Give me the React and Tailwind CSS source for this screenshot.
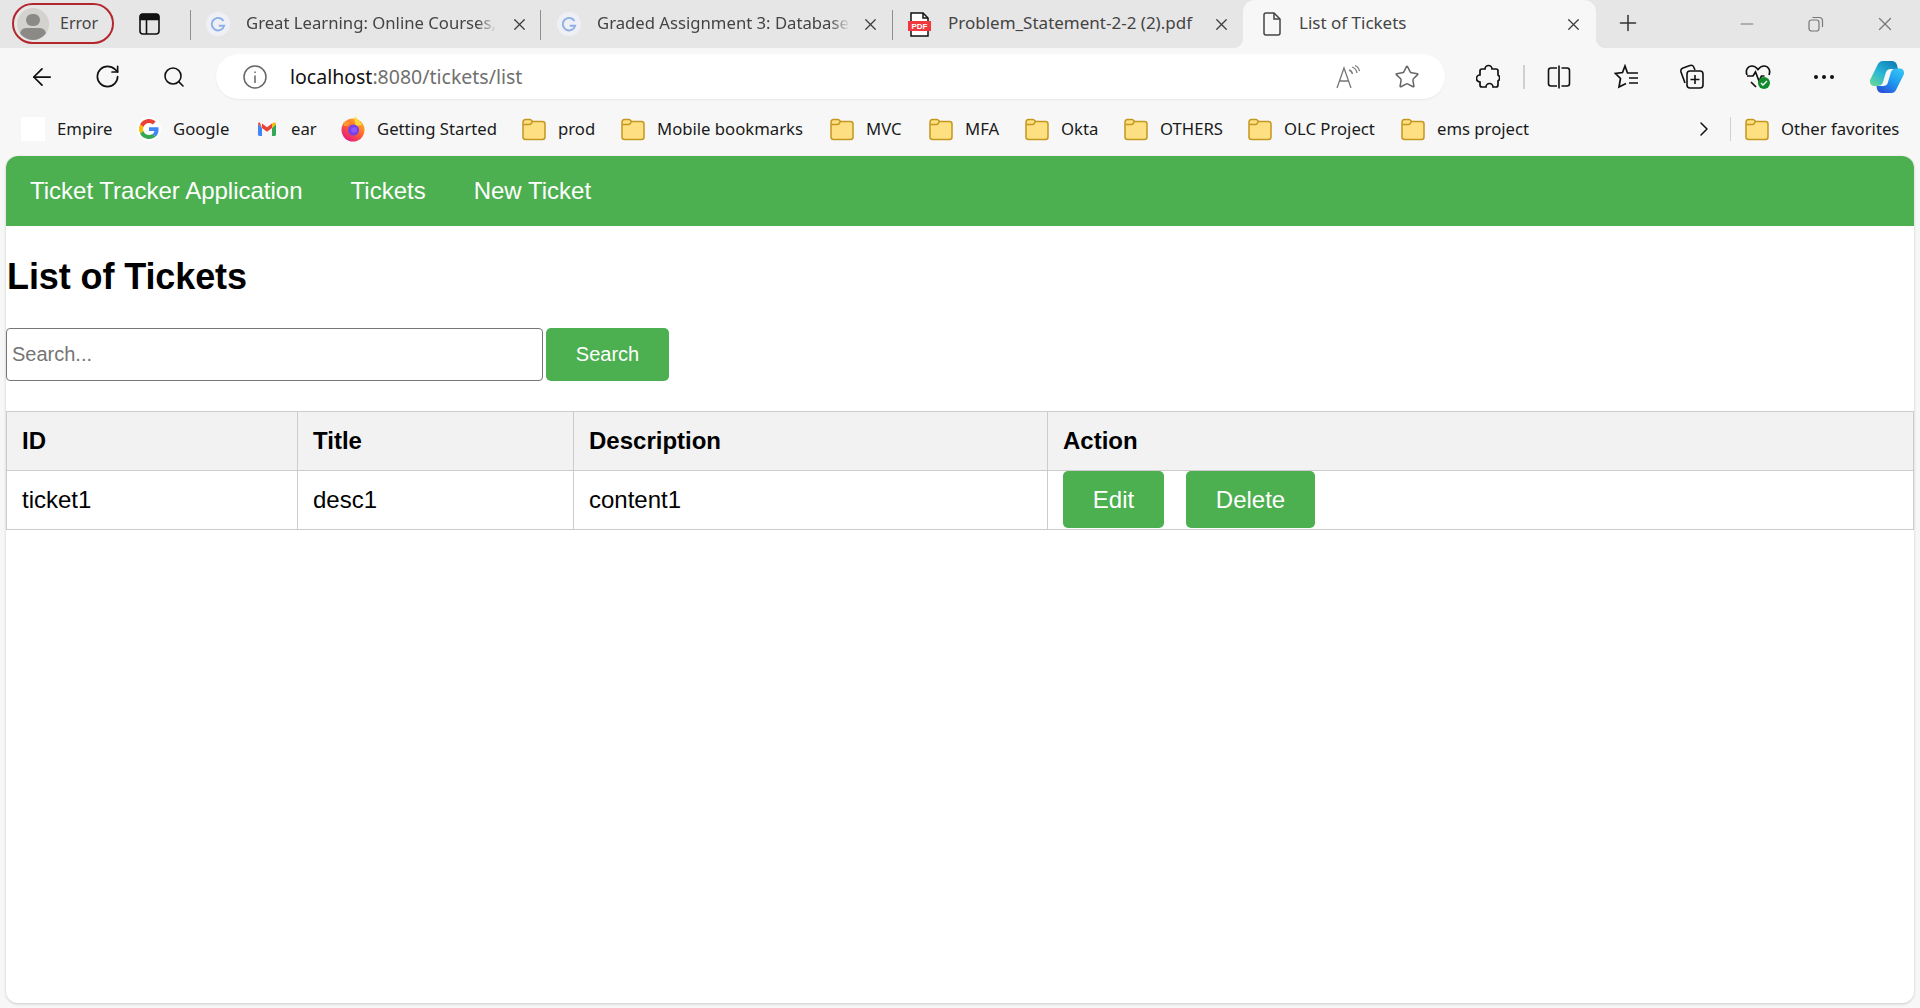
import { ArrowLeft, RotateCw, Search, Plus, X, Minus, ChevronRight, Star } from 'lucide-react';

const chromeFont = "font-['Noto_Sans',sans-serif]";

function GoogleFaded() {
  return (
    <div className="w-6 h-6 rounded-full bg-[#eef0f5] flex items-center justify-center">
      <svg width="15" height="15" viewBox="0 0 24 24" fill="none" stroke="#8fb0e6" strokeWidth="3">
        <path d="M20 6.5A10 10 0 1 0 21 14H12.5" />
      </svg>
    </div>
  );
}

function GoogleIcon() {
  return (
    <div className="-ml-[2px] w-6 h-6 rounded-full bg-white flex items-center justify-center">
      <svg width="20" height="20" viewBox="0 0 48 48">
        <path fill="#EA4335" d="M24 9.5c3.5 0 6.700 1.200 9.200 3.600l6.900-6.900C35.900 2.400 30.500 0 24 0 14.600 0 6.500 5.400 2.600 13.200l8 6.200C12.500 13.600 17.800 9.500 24 9.500z" />
        <path fill="#4285F4" d="M47 24.500c0-1.600-.1-3.100-.4-4.500H24v9h12.900c-.6 3-2.200 5.500-4.700 7.200l7.700 6c4.500-4.200 7.100-10.300 7.100-17.700z" />
        <path fill="#FBBC05" d="M10.600 28.600A14.500 14.500 0 0 1 9.800 24c0-1.600.3-3.200.8-4.600l-8-6.200A24 24 0 0 0 0 24c0 3.900.9 7.500 2.600 10.800l8-6.200z" />
        <path fill="#34A853" d="M24 48c6.500 0 11.900-2.100 15.900-5.800l-7.700-6c-2.200 1.500-4.900 2.300-8.200 2.300-6.200 0-11.500-4.100-13.400-9.900l-8 6.200C6.500 42.600 14.600 48 24 48z" />
      </svg>
    </div>
  );
}

function GmailIcon() {
  return (
    <svg width="18" height="14" viewBox="0 0 18 14">
      <path fill="#4285F4" d="M0 2v10.500C0 13.300.7 14 1.500 14H4V6z" />
      <path fill="#34A853" d="M14 6v8h2.500c.8 0 1.500-.7 1.500-1.500V2z" />
      <path fill="#EA4335" d="M4 6 1.800.6C1 0 0 .7 0 2l4 4 5 3.800L14 6V1.500L9 5.200 4 1.500z" />
      <path fill="#FBBC05" d="M14 1.500V6l4-4c0-1.300-1-2-1.800-1.400z" />
    </svg>
  );
}

function FirefoxIcon() {
  return (
    <svg width="24" height="26" viewBox="0 0 24 26">
      <defs>
        <linearGradient id="ffBody" x1="0.8" y1="0.1" x2="0.2" y2="0.95">
          <stop offset="0" stopColor="#ffb11f" />
          <stop offset="0.5" stopColor="#ff5a36" />
          <stop offset="1" stopColor="#e31587" />
        </linearGradient>
      </defs>
      <circle cx="12" cy="14" r="11.500" fill="url(#ffBody)" />
      <path d="M14 0c1 3 5 4 7 9l-6 1c-1-3-2-6-1-10z" fill="#ffd53d" />
      <path d="M2 7c2-2 6-2 7 0l-2 3H3z" fill="#ff9a2e" />
      <circle cx="12.500" cy="14" r="5.500" fill="#7542e5" />
      <circle cx="13" cy="14" r="2.800" fill="#9059ff" />
    </svg>
  );
}

function FolderIcon() {
  return (
    <svg width="24" height="24" viewBox="0 0 24 24">
      <path d="M1 5.500C1 3.600 2 2.500 3.500 2.500h4.300c1 0 1.700.5 2.200 1.300l.5.700h10C22.100 4.500 23 5.500 23 7v13c0 1.500-.9 2.500-2.500 2.500h-17C2 22.500 1 21.500 1 20z" fill="#fedf82" stroke="#c4981f" strokeWidth="1.500" />
      <path d="M1.500 7.500h6c1.400 0 2-1 2.700-3" fill="none" stroke="#c4981f" strokeWidth="1.500" />
    </svg>
  );
}

function CopilotIcon() {
  return (
    <svg width="36" height="34" viewBox="0 0 36 34">
      <defs>
        <linearGradient id="copA" x1="0" y1="1" x2="0.8" y2="0">
          <stop offset="0" stopColor="#6fdc8e" />
          <stop offset="0.5" stopColor="#27b6d6" />
          <stop offset="1" stopColor="#0f7fb8" />
        </linearGradient>
        <linearGradient id="copB" x1="0.2" y1="1" x2="0.9" y2="0">
          <stop offset="0" stopColor="#2a4fd8" />
          <stop offset="0.5" stopColor="#1e9bf0" />
          <stop offset="1" stopColor="#39c6f5" />
        </linearGradient>
      </defs>
      <path d="M8 6C9 3 11 1 14 1h9c2 0 4 1 5 4l1 4h-7c-3 0-4.500 1.500-5 3l-3 10c-1 3-3 4-6 4H5c-3 0-4.500-3-4-6z" fill="url(#copA)" />
      <path d="M28 28c-1 3-3 5-6 5h-9c-2 0-4-1-5-4l-.5-3H14c3 0 4.500-1.500 5-4l3-10c1-2.500 3-3.500 6-3.500h3c3 0 4.500 2.500 4 5.500z" fill="url(#copB)" />
    </svg>
  );
}

function TabClose() {
  return <X size={19} strokeWidth={1.6} className="text-[#3c3c3c]" />;
}

function Tabs() {
  return (
    <div className={`flex h-12 bg-[#e6e6e6] ${chromeFont}`}>
      <div className="ml-3 mt-[3px] w-[102px] h-[41px] rounded-full border-2 border-[#b3262c] flex items-center pl-[3px]">
        <div className="w-8 h-8 rounded-full bg-[#d3d2cf] overflow-hidden flex flex-col items-center">
          <div className="mt-[6px] w-[14px] h-[14px] rounded-full bg-[#8c8a87]" />
          <div className="mt-[2px] w-[26px] h-[14px] rounded-full bg-[#8c8a87]" />
        </div>
        <span className="ml-[11px] -mt-[2px] text-[16px] text-[#444]">Error</span>
      </div>

      <div className="ml-[25px] mt-[13px]">
        <svg width="21" height="22" viewBox="0 0 21 22" fill="none" stroke="#111" strokeWidth="1.600">
          <rect x="1" y="1" width="19" height="20" rx="3" />
          <path d="M1 6.500h19M7.500 6.500V21" />
          <path d="M3 1.500h15c1 0 1.500 1 1.500 2V6H1.500V3.500c0-1 .5-2 1.500-2z" fill="#111" />
        </svg>
      </div>

      <div className="ml-[30px] mt-[10px] w-px h-[30px] bg-[#8f8f8f]" />

      <div className="w-[349px] flex items-center pl-[15px] h-[48px]">
        <GoogleFaded />
        <span className="ml-[16px] -mt-[2px] w-[251px] whitespace-nowrap text-[16.7px] text-[#444] [mask-image:linear-gradient(to_right,black_92%,transparent)]">
          Great Learning: Online Courses,
        </span>
        <div className="ml-[13px]"><TabClose /></div>
      </div>

      <div className="mt-[10px] w-px h-[30px] bg-[#8f8f8f]" />

      <div className="w-[351px] flex items-center pl-[16px] h-[48px]">
        <GoogleFaded />
        <span className="ml-[16px] -mt-[2px] w-[253px] whitespace-nowrap text-[16.7px] text-[#444] [mask-image:linear-gradient(to_right,black_92%,transparent)]">
          Graded Assignment 3: Database
        </span>
        <div className="ml-[11px]"><TabClose /></div>
      </div>

      <div className="mt-[10px] w-px h-[30px] bg-[#8f8f8f]" />

      <div className="w-[350px] flex items-center pl-[15px] h-[48px]">
        <svg width="23" height="25" viewBox="0 0 23 25">
          <path d="M3 1h12l5 5v18H3z" fill="#fff" stroke="#111" strokeWidth="1.500" />
          <path d="M15 1v5h5" fill="none" stroke="#111" strokeWidth="1.500" />
          <rect x="0" y="9" width="23" height="10" fill="#f0383f" />
          <text x="11.500" y="17" textAnchor="middle" fontSize="8" fontWeight="700" fill="#fff" fontFamily="Liberation Sans, sans-serif">PDF</text>
        </svg>
        <span className="ml-[17px] -mt-[2px] w-[256px] whitespace-nowrap text-[17px] text-[#444]">Problem_Statement-2-2 (2).pdf</span>
        <div className="ml-[8px]"><TabClose /></div>
      </div>

      <div className="relative w-[353px] flex items-center pl-[20px] h-[48px] bg-[#f7f7f7] rounded-t-[12px] before:absolute before:left-[-10px] before:bottom-0 before:w-[10px] before:h-[10px] before:bg-[radial-gradient(circle_at_0_0,#e6e6e6_10px,#f7f7f7_10.5px)] after:absolute after:right-[-10px] after:bottom-0 after:w-[10px] after:h-[10px] after:bg-[radial-gradient(circle_at_100%_0,#e6e6e6_10px,#f7f7f7_10.5px)]">
        <svg width="18" height="24" viewBox="0 0 18 24" fill="none" stroke="#444" strokeWidth="1.500">
          <path d="M3 1h8l6 6v14c0 1.200-.8 2-2 2H3c-1.200 0-2-.8-2-2V3c0-1.200.8-2 2-2z" />
          <path d="M11 1v6h6" />
        </svg>
        <span className="ml-[18px] -mt-[2px] w-[265px] text-[17px] text-[#444]">List of Tickets</span>
        <TabClose />
      </div>

      <Plus size={26} strokeWidth={1.400} className="ml-[19px] mt-[10px] text-[#333]" />
      <Minus size={20} strokeWidth={1.300} className="ml-[96px] mt-[14px] text-[#777]" />
      <div className="ml-[51px] mt-[16px]">
        <svg width="16" height="16" viewBox="0 0 16 16" fill="none" stroke="#777" strokeWidth="1.200">
          <rect x="1" y="4" width="10" height="11" rx="2.500" />
          <path d="M4.500 1.500h6.500c2 0 3.500 1.500 3.500 3.500v6" />
        </svg>
      </div>
      <X size={22} strokeWidth={1.300} className="ml-[50px] mt-[13px] text-[#777]" />
    </div>
  );
}

function Toolbar() {
  return (
    <div className={`flex items-center h-[62px] pb-[5px] ${chromeFont}`}>
      <ArrowLeft size={28} strokeWidth={1.500} className="ml-7 text-[#111]" />
      <RotateCw size={27} strokeWidth={1.500} className="ml-[38px] text-[#111]" />
      <Search size={24} strokeWidth={1.600} className="ml-[41px] text-[#111] " />

      <div className="ml-[30px] w-[1229px] h-[45px] rounded-full bg-white shadow-[0_1px_2px_rgba(0,0,0,0.06)] flex items-center pl-[27px]">
        <svg width="24" height="24" viewBox="0 0 24 24" fill="none" stroke="#666" strokeWidth="1.500">
          <circle cx="12" cy="12" r="11" />
          <path d="M12 10.500V18M12 6.500v1.500" />
        </svg>
        <span className="ml-[23px] w-[1046px] text-[19.5px] text-[#111]">
          localhost<span className="text-[#70706f]">:8080/tickets/list</span>
        </span>
        <svg width="24" height="24" viewBox="0 0 24 24" fill="none" stroke="#777" strokeWidth="1.300">
          <path d="M1 23 8 3l7 20M3.500 16h9" />
          <path d="M13 5c2 .5 3 2 3.500 4M16 2c3 1 4.500 3 5 6M19 .5c2.500 1 4 3 4.500 5.500" />
        </svg>
        <Star size={26} strokeWidth={1.400} className="ml-[34px] text-[#666]" />
      </div>

      <svg width="24" height="26" viewBox="0 0 24 26" fill="none" stroke="#111" strokeWidth="1.700" className="ml-[31px]">
        <path d="M9 5a3.500 3.500 0 0 1 7 0h4c1 0 2 1 2 2v4a3.500 3.500 0 0 1 0 6v4c0 1-1 2-2 2h-3a3.500 3.500 0 0 0-7 0H6c-1 0-2-1-2-2v-3a3.500 3.500 0 0 1 0-7V7c0-1 1-2 2-2z" />
      </svg>
      <div className="ml-[23px] w-[2px] h-[24px] bg-[#d0d0d0]" />
      <svg width="24" height="24" viewBox="0 0 24 24" fill="none" stroke="#111" strokeWidth="1.600" className="ml-[22px]">
        <path d="M10 3H4C2.500 3 1.500 4 1.500 5.500v13C1.500 20 2.500 21 4 21h6M14.500 3H20c1.500 0 2.500 1 2.500 2.500v13c0 1.500-1 2.500-2.500 2.500h-5.500M12 0.500v23" />
      </svg>
      <svg width="25" height="25" viewBox="0 0 25 25" fill="none" stroke="#111" strokeWidth="1.700" className="ml-[43px]">
        <path d="M16 9h-2.500L11 2 8.500 8.500l-7 1 5 5L5 23l7-3.500" />
        <path d="M16 9h8M15 14h9M15 19h9" />
      </svg>
      <svg width="25" height="25" viewBox="0 0 25 25" fill="none" stroke="#111" strokeWidth="1.600" className="ml-[40px]">
        <path d="M6 19 2 8c-.5-2 .5-3.500 2-4l7-2.500c1.500-.5 3 0 3.700 1.500L16 6" />
        <rect x="8" y="7" width="16" height="17" rx="3" />
        <path d="M16 11v9M11.500 15.500h9" />
      </svg>
      <svg width="26" height="26" viewBox="0 0 26 26" className="ml-[41px]">
        <path d="M2 11C0 6 3 2 7 2c2.500 0 4.500 1.500 6 3.500C14.500 3.500 16.500 2 19 2c4 0 7 4 5 9M2 12h6l2.500-4 3.500 9 2.500-5h3M6 18l5 5" fill="none" stroke="#111" strokeWidth="1.700" />
        <circle cx="19" cy="19" r="6" fill="#128a2e" />
        <path d="M16 19l2 2 4-4" fill="none" stroke="#fff" strokeWidth="1.400" />
      </svg>
      <div className="ml-[43px] flex gap-[4px]">
        <div className="w-1 h-1 rounded-full bg-[#111]" />
        <div className="w-1 h-1 rounded-full bg-[#111]" />
        <div className="w-1 h-1 rounded-full bg-[#111]" />
      </div>
      <div className="ml-[35px]"><CopilotIcon /></div>
    </div>
  );
}

const bookmarks = [
  { label: 'Empire', icon: <div className="w-6 h-6 bg-white" />, width: 'w-[118px]', slot: 'w-9' },
  { label: 'Google', icon: <GoogleIcon />, width: 'w-[119px]', slot: 'w-[34px]' },
  { label: 'ear', icon: <GmailIcon />, width: 'w-[83px]', slot: 'w-[33px]' },
  { label: 'Getting Started', icon: <FirefoxIcon />, width: 'w-[181px]', slot: 'w-9' },
  { label: 'prod', icon: <FolderIcon />, width: 'w-[99px]', slot: 'w-9' },
  { label: 'Mobile bookmarks', icon: <FolderIcon />, width: 'w-[209px]', slot: 'w-9' },
  { label: 'MVC', icon: <FolderIcon />, width: 'w-[99px]', slot: 'w-9' },
  { label: 'MFA', icon: <FolderIcon />, width: 'w-[96px]', slot: 'w-9' },
  { label: 'Okta', icon: <FolderIcon />, width: 'w-[99px]', slot: 'w-9' },
  { label: 'OTHERS', icon: <FolderIcon />, width: 'w-[124px]', slot: 'w-9' },
  { label: 'OLC Project', icon: <FolderIcon />, width: 'w-[153px]', slot: 'w-9' },
  { label: 'ems project', icon: <FolderIcon />, width: 'w-[298px]', slot: 'w-9' },
];

function Bookmarks() {
  return (
    <div className={`flex items-center h-[46px] pb-[8px] pl-[21px] text-[16.7px] text-[#1a1a1a] ${chromeFont}`}>
      {bookmarks.map((b) => (
        <div key={b.label} className={`flex items-center ${b.width}`}>
          <div className={b.slot}>{b.icon}</div>
          <span className="whitespace-nowrap">{b.label}</span>
        </div>
      ))}
      <ChevronRight size={24} strokeWidth={1.500} className="text-[#111] ml-[-7px]" />
      <div className="ml-[14px] w-px h-[24px] bg-[#d0d0d0]" />
      <div className="ml-[14px] flex items-center">
        <div className="w-9"><FolderIcon /></div>
        <span className="whitespace-nowrap">Other favorites</span>
      </div>
    </div>
  );
}

function Page() {
  return (
    <div className="mx-[6px] h-[847px] bg-white rounded-[12px] shadow-[0_1px_3px_rgba(0,0,0,0.18)] font-['Liberation_Sans',Arial,sans-serif] text-black">
      <nav className="flex items-center h-[70px] bg-[#4caf50] rounded-t-[12px] pl-6 gap-12 text-[24px] text-white">
        <a>Ticket Tracker Application</a>
        <a>Tickets</a>
        <a>New Ticket</a>
      </nav>

      <h1 className="mt-[30px] ml-px text-[36px] leading-[41px] font-bold tracking-[-0.1px]">List of Tickets</h1>

      <div className="mt-[31px] flex gap-[3px]">
        <input
          placeholder="Search..."
          className="w-[537px] h-[53px] px-[5px] rounded-[4px] border border-[#767676] text-[20px] placeholder:text-[#757575]"
        />
        <button className="w-[123px] h-[53px] pb-[2px] rounded-[5px] bg-[#4caf50] text-[20px] text-white">Search</button>
      </div>

      <table className="mt-[30px] w-full table-fixed border-collapse text-[24px]">
        <thead>
          <tr className="bg-[#f2f2f2]">
            <th className="w-[291px] h-[59px] px-[15px] border border-[#ccc] text-left font-bold">ID</th>
            <th className="w-[276px] px-[15px] border border-[#ccc] text-left font-bold">Title</th>
            <th className="w-[474px] px-[15px] border border-[#ccc] text-left font-bold">Description</th>
            <th className="px-[15px] border border-[#ccc] text-left font-bold">Action</th>
          </tr>
        </thead>
        <tbody>
          <tr>
            <td className="h-[59px] px-[15px] border border-[#ccc]">ticket1</td>
            <td className="px-[15px] border border-[#ccc]">desc1</td>
            <td className="px-[15px] border border-[#ccc]">content1</td>
            <td className="px-[15px] border border-[#ccc]">
              <div className="flex gap-[22px] -mt-px">
                <button className="h-[57px] w-[101px] pt-px rounded-[5px] bg-[#4caf50] text-white">Edit</button>
                <button className="h-[57px] w-[129px] pt-px rounded-[5px] bg-[#4caf50] text-white">Delete</button>
              </div>
            </td>
          </tr>
        </tbody>
      </table>
    </div>
  );
}

export default function App() {
  return (
    <div className="h-[1008px] overflow-hidden bg-[#f7f7f7]">
      <Tabs />
      <Toolbar />
      <Bookmarks />
      <Page />
    </div>
  );
}
